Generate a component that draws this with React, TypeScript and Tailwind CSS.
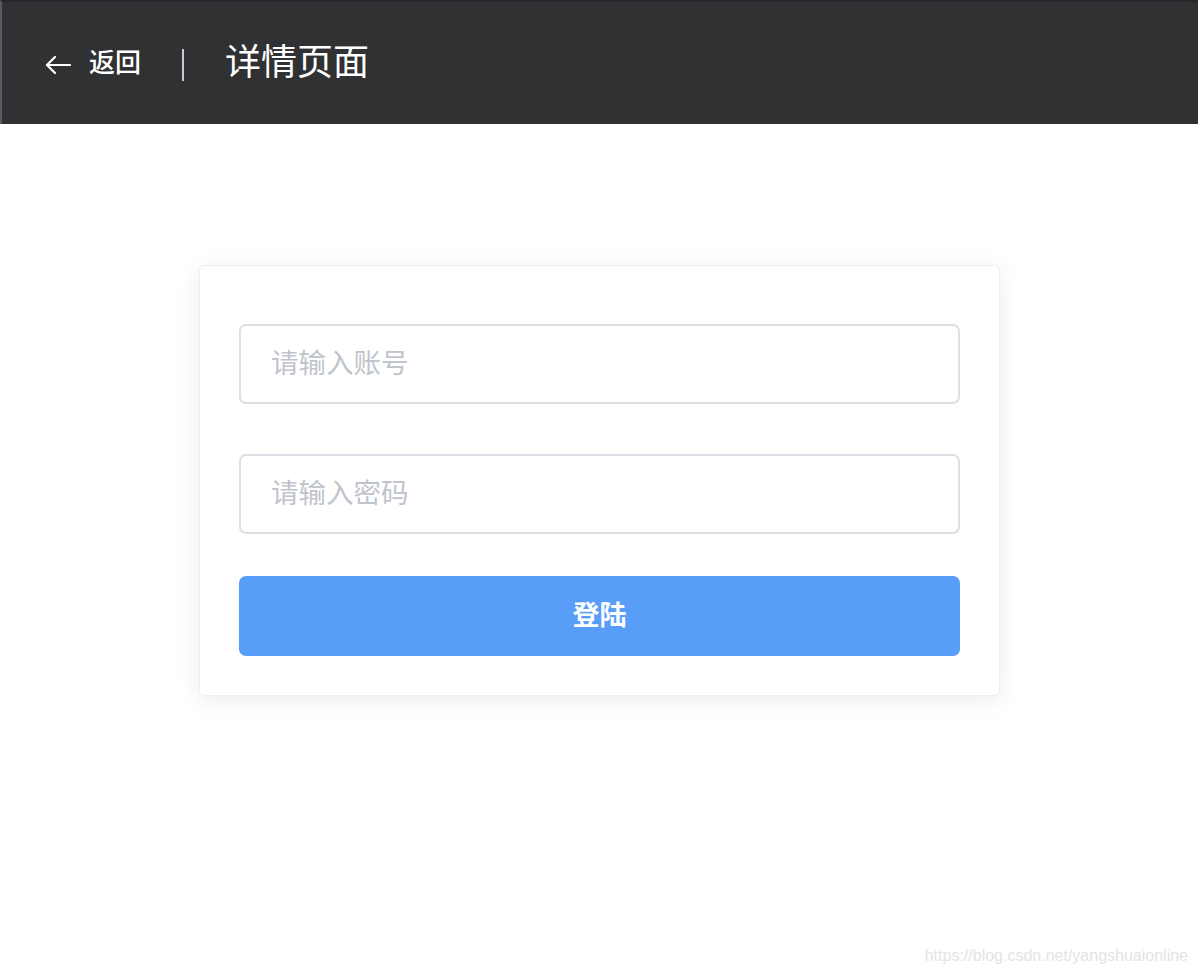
import React from 'react'

const font = { fontFamily: '"Noto Sans CJK SC", "Noto Sans", sans-serif' }

const App = () => {
  return (
    <div className="relative min-h-[976px] w-full bg-white" style={font}>
      <div className="flex h-[124px] items-center border-t-[2px] border-l-[2px] border-t-[#26272a] border-l-[#5b5c5f] bg-[#303133] pl-[43px] text-white">
        <div className="flex items-center gap-[18px]">
          <svg className="mt-[4px]" width="26" height="20" viewBox="0 0 26 20" fill="none" stroke="white" strokeWidth="2.2" strokeLinecap="round" strokeLinejoin="round">
            <path d="M25 10H2" />
            <path d="M10 2L2 10L10 18" />
          </svg>
          <span className="mb-[4px] text-[26px] font-medium leading-none">返回</span>
        </div>
        <div className="ml-[41px] mt-[4px] h-[32px] w-[2px] bg-[#c9cbd0]" />
        <div className="mb-[8px] ml-[41px] text-[36px] leading-none">详情页面</div>
      </div>

      <div className="flex justify-center pt-[141px] pl-[1px]">
        <div className="w-[801px] rounded-[5px] border border-[#ebeef5] bg-white px-[39px] pt-[58px] pb-[39px] shadow-[0_4px_24px_rgba(0,0,0,0.08)]">
          <div className="flex h-[80px] items-center rounded-[7px] border-2 border-[#dcdfe6] pb-[4px] pl-[30px] text-[27.5px] text-[#c0c4cc]">
            请输入账号
          </div>
          <div className="mt-[50px] flex h-[80px] items-center rounded-[7px] border-2 border-[#dcdfe6] pb-[4px] pl-[30px] text-[27.5px] text-[#c0c4cc]">
            请输入密码
          </div>
          <div className="mt-[42px] flex h-[80px] items-center justify-center rounded-[7px] bg-[#589df8] pb-[4px] text-[27px] font-bold text-white">
            登陆
          </div>
        </div>
      </div>

      <div
        className="absolute right-[10px] bottom-[8px] text-[16px] text-[#e4e4e4]"
        style={{ fontFamily: '"Liberation Sans", Arial, sans-serif' }}
      >
        https://blog.csdn.net/yangshuaionline
      </div>
    </div>
  )
}

export default App
